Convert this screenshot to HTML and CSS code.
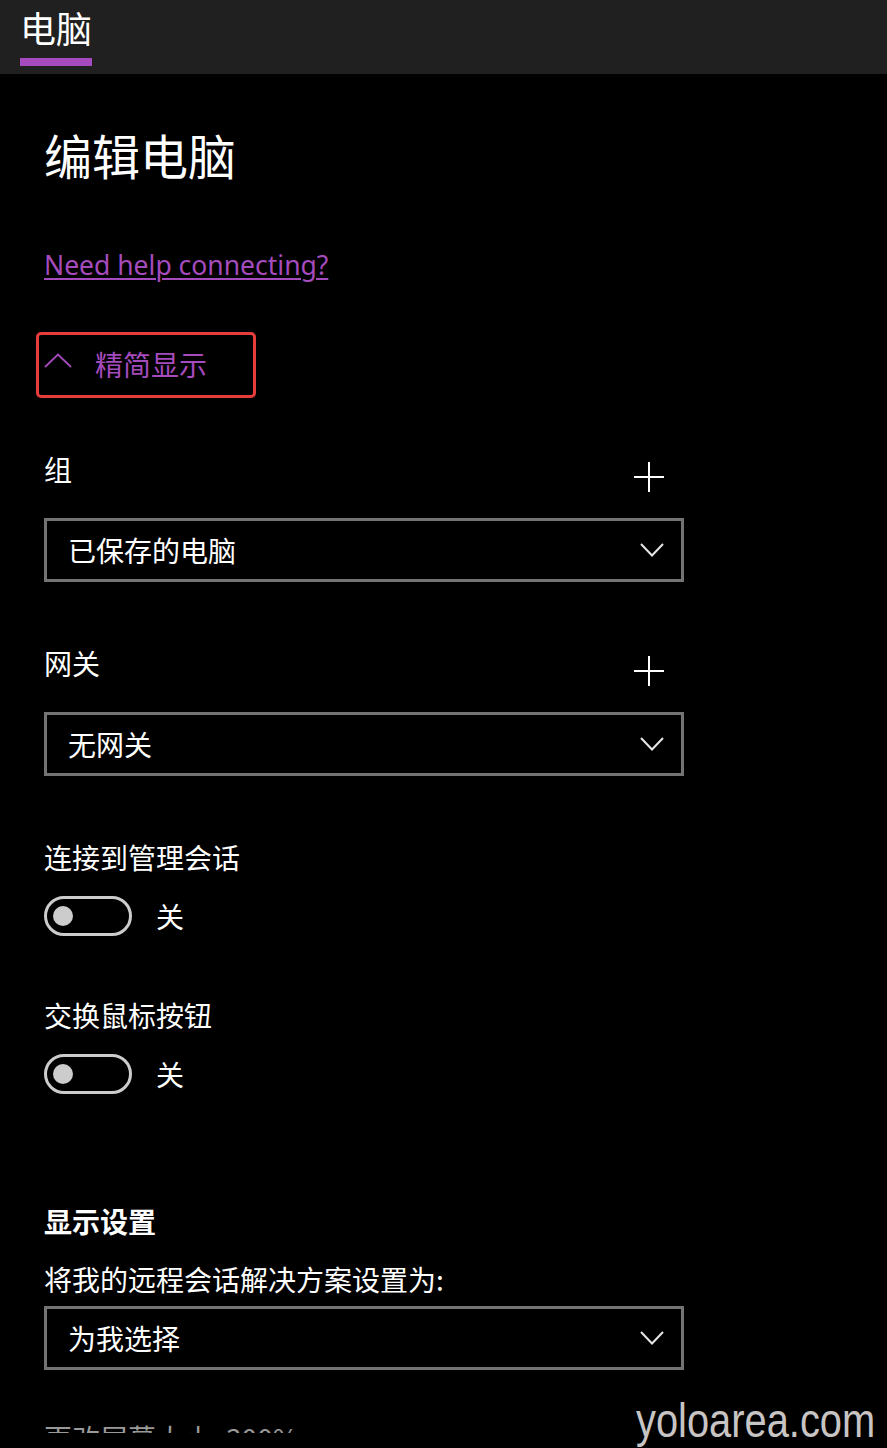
FILE: index.html
```html
<!DOCTYPE html>
<html lang="zh">
<head>
<meta charset="utf-8">
<title>编辑电脑</title>
<link rel="stylesheet" href="styles.css">
</head>
<body>
<header class="topbar">
  <div class="tab">
    <span class="tab-label">电脑</span>
    <span class="tab-bar"></span>
  </div>
</header>
<main class="main">
  <h1 class="title">编辑电脑</h1>
  <p class="help"><a href="#" class="help-link">Need help connecting?</a></p>
  <div class="collapse">
    <svg class="chev-up" width="28" height="15" viewBox="0 0 28 15"><polyline points="1,14 14,1.5 27,14" fill="none" stroke="#a54bbd" stroke-width="1.8"/></svg>
    <span class="collapse-text">精简显示</span>
  </div>

  <section class="group first">
    <div class="field-head">
      <span class="label">组</span>
      <svg class="plus" width="30" height="30" viewBox="0 0 30 30"><path d="M15 0V30M0 15H30" stroke="#fff" stroke-width="2"/></svg>
    </div>
    <div class="select"><span>已保存的电脑</span><svg class="chev-down" width="24" height="14" viewBox="0 0 24 14"><polyline points="1,1 12,12.5 23,1" fill="none" stroke="#e6e6e6" stroke-width="2"/></svg></div>
  </section>

  <section class="group">
    <div class="field-head">
      <span class="label">网关</span>
      <svg class="plus" width="30" height="30" viewBox="0 0 30 30"><path d="M15 0V30M0 15H30" stroke="#fff" stroke-width="2"/></svg>
    </div>
    <div class="select"><span>无网关</span><svg class="chev-down" width="24" height="14" viewBox="0 0 24 14"><polyline points="1,1 12,12.5 23,1" fill="none" stroke="#e6e6e6" stroke-width="2"/></svg></div>
  </section>

  <section class="group">
    <div class="label">连接到管理会话</div>
    <div class="toggle-row"><span class="toggle"><span class="knob"></span></span><span class="toggle-text">关</span></div>
  </section>

  <section class="group toggle-group">
    <div class="label">交换鼠标按钮</div>
    <div class="toggle-row"><span class="toggle"><span class="knob"></span></span><span class="toggle-text">关</span></div>
  </section>

  <section class="display">
    <h2 class="section-title">显示设置</h2>
    <div class="label res-label">将我的远程会话解决方案设置为:</div>
    <div class="select res-select"><span>为我选择</span><svg class="chev-down" width="24" height="14" viewBox="0 0 24 14"><polyline points="1,1 12,12.5 23,1" fill="none" stroke="#e6e6e6" stroke-width="2"/></svg></div>
    <div class="clip"><div class="label dim">更改屏幕大小: 300%</div></div>
  </section>
</main>
<div class="watermark">yoloarea.com</div>
</body>
</html>
```
FILE: styles.css
```css
html, body {
  margin: 0;
  background: #000;
}
body {
  color: #fff;
  font-family: "Noto Sans CJK SC", "Noto Sans", sans-serif;
  position: relative;
  height: 1448px;
  overflow: hidden;
}
.topbar {
  height: 74px;
  background: #202020;
  padding-left: 20px;
  box-sizing: border-box;
}
.tab {
  display: inline-flex;
  flex-direction: column;
  padding-top: 3px;
}
.tab-label {
  font-size: 36px;
  line-height: 48px;
}
.tab-bar {
  height: 8px;
  margin-top: 7px;
  background: #a54bbd;
}
.main {
  padding: 0 44px;
}
.title {
  margin: 50px 0 0;
  font-size: 48px;
  line-height: 60px;
  font-weight: 400;
}
.help {
  margin: 63px 0 0;
  font-family: "Noto Sans", sans-serif;
  font-size: 26.5px;
  line-height: 36px;
}
.help-link {
  color: #a54bbd;
  text-decoration: underline;
  text-decoration-thickness: 2px;
  text-underline-offset: 3px;
}
.collapse {
  display: flex;
  align-items: center;
  width: 220px;
  height: 66px;
  box-sizing: border-box;
  margin: 49px 0 0 -8px;
  padding-left: 5px;
  border: 3px solid #e53c3c;
  border-radius: 5px;
  color: #a54bbd;
  font-size: 28px;
  line-height: 36px;
}
.collapse-text {
  margin-top: -3px;
}
.chev-up {
  margin-right: 23px;
  margin-top: -9px;
}
.group {
  margin-top: 63px;
}
.group.first {
  margin-top: 53px;
}
.field-head {
  display: flex;
  justify-content: space-between;
  align-items: flex-start;
  width: 640px;
}
.label {
  font-size: 28px;
  line-height: 36px;
}
.plus {
  margin-top: 11px;
  margin-right: 20px;
}
.select {
  display: flex;
  align-items: center;
  justify-content: space-between;
  width: 640px;
  height: 64px;
  box-sizing: border-box;
  margin-top: 26px;
  padding: 0 17px 0 21px;
  border: 3px solid #737373;
  font-size: 28px;
  line-height: 36px;
}
.toggle-row {
  display: flex;
  align-items: center;
  margin-top: 21px;
}
.toggle {
  display: flex;
  align-items: center;
  width: 88px;
  height: 40px;
  box-sizing: border-box;
  border: 3px solid #cccccc;
  border-radius: 20px;
  padding-left: 6px;
}
.knob {
  width: 20px;
  height: 20px;
  border-radius: 50%;
  background: #cccccc;
}
.toggle-text {
  margin-left: 24px;
  font-size: 28px;
  line-height: 36px;
}
.toggle-group {
  margin-top: 61px;
}
.display {
  margin-top: 109px;
}
.section-title {
  margin: 0;
  font-size: 28px;
  line-height: 36px;
  font-weight: 700;
}
.res-label {
  margin-top: 22px;
}
.res-select {
  margin-top: 9px;
}
.clip {
  margin-top: 50px;
  height: 13px;
  overflow: hidden;
}
.dim {
  color: #9a9a9a;
}
.watermark {
  position: absolute;
  left: 636px;
  top: 1397px;
  font-family: "Liberation Sans", Arial, sans-serif;
  font-size: 48px;
  line-height: 48px;
  color: #c8c4c4;
  transform: scaleX(0.83);
  transform-origin: left top;
  white-space: nowrap;
}
```
